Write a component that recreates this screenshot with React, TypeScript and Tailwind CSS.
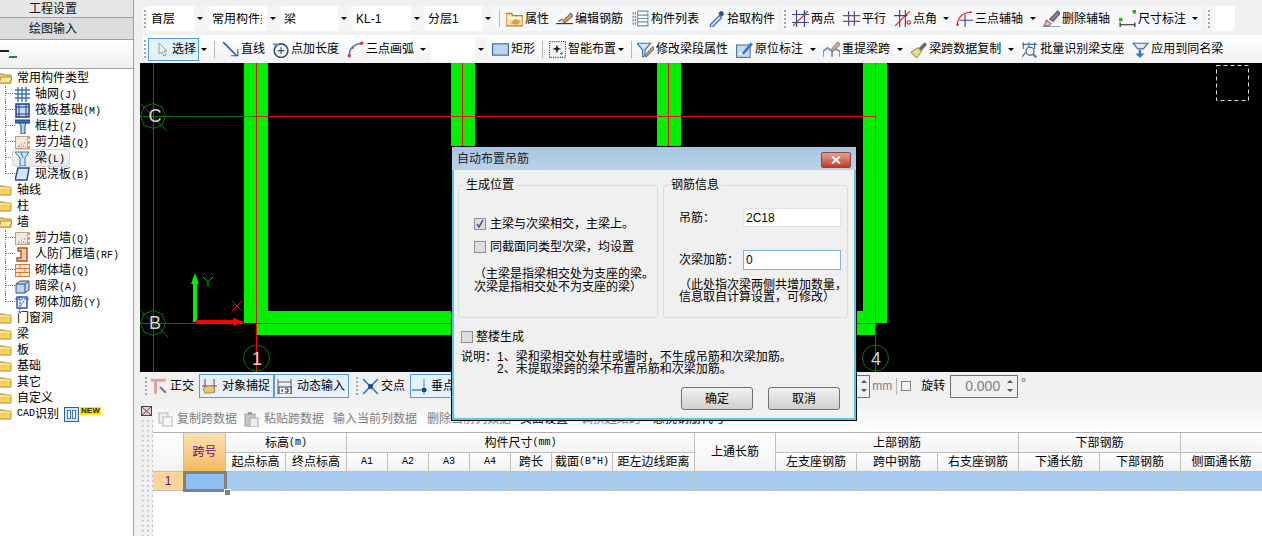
import type { ReactNode } from "react";

function Ico({ children, size = 15, className = "" }: { children: ReactNode; size?: number; className?: string }) {
  return (
    <svg width={size} height={size} viewBox="0 0 15 15" className={`shrink-0 ${className}`} fill="none">
      {children}
    </svg>
  );
}

const icons = {
  attr: (<><path d="M0 3h5l1 2h9v9H0z" fill="#f9dd9b" stroke="#bd7a35" /><path d="M2 6h11v2H2z" fill="#fff" /><path d="M4 12l4-4 5 2-3 3z" fill="#e0a040" /></>),
  edit: (<><path d="M0 12h15" stroke="#333" /><path d="M6 10l7-7 2 2-7 6z" fill="#e9a46a" stroke="#8a6d5a" /><path d="M2 10l4-2" stroke="#555" /></>),
  list: (<><path d="M1 2v11M3 2v11" stroke="#5b7fa8" strokeDasharray="2 1" /><path d="M5 1h9v13H5z" fill="#fff" stroke="#6d8fb8" /><path d="M5 4.5h9M5 7.5h9M5 10.5h9" stroke="#6d8fb8" /></>),
  pick: (<><path d="M2 13l8-8 2 2-8 8H2z" fill="#cfe2f7" stroke="#3c6fb3" /><path d="M9 3l3 3 2-2-1-3h-2z" fill="#1f4f94" /></>),
  two: (<><path d="M4 0v15M11 0v15M0 4h15M0 11h15" stroke="#3a3f8f" /><path d="M1 14L14 1" stroke="#c22" /><rect x="3" y="10" width="2" height="2" fill="#2b9b2b" /><rect x="10" y="3" width="2" height="2" fill="#2b9b2b" /></>),
  para: (<><path d="M5 1v13M10 1v13" stroke="#3a3f8f" /><path d="M0 5h15M0 10h15" stroke="#b4344e" /></>),
  angle: (<><path d="M5 0v15M10 0v15M0 5h12" stroke="#3a3f8f" /><path d="M1 14L14 1" stroke="#c22" /><circle cx="13" cy="11" r="1.5" stroke="#c22" /></>),
  arc: (<><path d="M1 14C1 7 6 2 13 2" stroke="#d22" /><circle cx="1.5" cy="13" r="1" fill="#d22" /><circle cx="13" cy="2" r="1" fill="#d22" /><path d="M8 4v11M3 9h12" stroke="#3a3f8f" /></>),
  del: (<><path d="M6 8l7-7 2 2-6 7z" fill="#8d7ab5" stroke="#555" /><path d="M3 9l4 3-2 2H1z" fill="#e8c8b0" stroke="#9a6a6a" /><path d="M0 15h15" stroke="#2a6ab5" /></>),
  dim: (<><rect x="0" y="7" width="3" height="3" fill="#2fa52f" /><rect x="12" y="0" width="3" height="3" fill="#2fa52f" /><path d="M1 11v4M14 11v4M1 13h13" stroke="#222" /></>),
  select: (<path d="M4 1v11l3-2 2 4 2-1-2-4h3z" fill="#eef3fa" stroke="#8aa0c0" />),
  line: (<><path d="M1 1l12 12" stroke="#2f5f9e" strokeWidth="1.5" /><path d="M8 13h6V7" stroke="#2f5f9e" /></>),
  ext: (<><circle cx="8" cy="8.5" r="6" stroke="#33507a" strokeWidth="1.4" /><path d="M8 5.5v6M5 8.5h6" stroke="#33507a" /><path d="M1 2h5v2H1z" fill="#5fa0dd" /></>),
  arc2: (<><path d="M2 13C2 7 6 3 13 2" stroke="#4a7fb5" strokeWidth="1.4" /><circle cx="2" cy="13" r="1.5" fill="#d33" /><circle cx="13" cy="2" r="1.5" fill="#d33" /><circle cx="5" cy="6" r="1" fill="#d33" /></>),
  rect: (<rect x="0.5" y="2.5" width="14" height="10" fill="#bcd3f3" stroke="#3b68ad" />),
  smart: (<><rect x="0.5" y="0.5" width="14" height="14" stroke="#444" strokeDasharray="1 1" /><path d="M7 3l1 3 3 1-3 1-1 3-1-3-3-1 3-1z" fill="#222" /><rect x="10" y="10" width="2" height="2" fill="#4a7fb5" /></>),
  modify: (<><path d="M0 2h12L7 8v5l-2 1V8z" fill="#cfe6f7" stroke="#2b74b8" /><path d="M7 13l7-8 1 2-7 7z" fill="#e9b08a" stroke="#8a6d5a" /></>),
  origin: (<><rect x="0.5" y="3.5" width="12" height="11" fill="#c5d8ee" stroke="#567ba8" /><path d="M5 11l8-10 2 2-8 9z" fill="#3a78c8" /><path d="M2 12l2-3 2 3z" fill="#fff" /></>),
  re: (<><path d="M0 14V9l4-3 4 3v5M8 14V9l3-2 4 2v5" stroke="#6d8fb8" strokeWidth="1.5" /><path d="M7 8l6-7 2 2-6 6z" fill="#e9b08a" stroke="#9a8a7a" /></>),
  copy: (<><path d="M7 7l6-6 2 2-5 6z" fill="#6a6a5a" /><path d="M1 10l6-4 3 3-4 6z" fill="#eadb9a" stroke="#a89a5a" /></>),
  batch: (<><path d="M1 3h13M2 1v6M7 1v6M12 1v6M1 14l3-4" stroke="#2f73b5" /><circle cx="8" cy="9" r="3.5" fill="#eef3fa" stroke="#555" /><path d="M10.5 11.5l3 3" stroke="#777" strokeWidth="2" /></>),
  apply: (<><path d="M1 2h13l-4 5H5z" fill="#dce9f7" stroke="#3b68ad" /><path d="M8 8v3h3l-4 4-4-4h3V8z" fill="#3b78c0" /></>),
  grid: (<path d="M0 3h15M0 7h15M0 11h15M3 0v15M7 0v15M11 0v15" stroke="#3f6fc0" strokeWidth="1.4" />),
  raft: (<><rect x="1" y="1" width="13" height="13" fill="#c9d7ef" stroke="#1f3f86" strokeWidth="1.5" /><path d="M1 4h13M1 11h13M4 1v13M11 1v13" stroke="#1f3f86" /></>),
  col: (<><path d="M0 1h15v3H0z" fill="#3f6fc0" stroke="#1f3f86" /><path d="M4 4h7l-1 3v8H6V7z" fill="#b6cdeb" stroke="#1f4f94" /></>),
  wall: (<><rect x="0.5" y="1.5" width="12" height="12" fill="#f0eae2" stroke="#caa27a" /><path d="M4 11h1M6 9h1M8 11h1M6 12h1M9 8h1M3 12h1M10 12h1" stroke="#777" /><path d="M14 1v3M14 6v3M14 11v3" stroke="#d87a2a" strokeWidth="1.5" /></>),
  beam: (<><path d="M0 1h14l-4 6v8H5V7z" fill="#cfe6f7" stroke="#2b74b8" /><path d="M6 1l2 6" stroke="#2b74b8" /></>),
  slab: (<path d="M3 1h11l-2 12H0z" fill="#d6e4f7" stroke="#1f4f9e" strokeWidth="1.5" />),
  door: (<path d="M3 1h9v13H2v-3h4V4H3z" fill="#f3c9a0" stroke="#a8521e" strokeWidth="1.4" />),
  brick: (<><rect x="0.5" y="1.5" width="14" height="12" fill="#fbe6d4" stroke="#d87a3a" /><path d="M0 5.5h15M0 9.5h15M5 1v4M10 5v4M5 9v5" stroke="#d87a3a" /></>),
  hid: (<><path d="M1 5l4-3h9v9l-4 3H1z" fill="#bcd3f3" stroke="#33507a" /><path d="M1 5h9v9M10 5l4-3" stroke="#33507a" /></>),
  mas: (<><rect x="2" y="2" width="10" height="11" fill="#eef3fa" stroke="#1f4fb0" strokeWidth="1.4" /><path d="M0 4h15M5 1v14M9 6l-4 5" stroke="#1f4fb0" strokeDasharray="2 1" /></>),
  ortho: (<><path d="M0 2h13M4 2v12" stroke="#dca0a0" strokeWidth="2.5" /><path d="M8 8l5 5" stroke="#6a7a9a" strokeWidth="2" /></>),
  snap: (<><path d="M3 0v14M12 0v14M0 7h15" stroke="#7a3a3a" /><path d="M1 10c3-4 8-4 11-2l1 4-4 2H3z" fill="#e8c878" stroke="#a88a3a" /></>),
  dyn: (<><path d="M1 0v15M1 3h13M14 0v15" stroke="#7a5a5a" /><rect x="2" y="8" width="12" height="7" fill="#fff" stroke="#333" /><path d="M5 10v3M8 10h3v3H8" stroke="#111" /></>),
  cross: (<><path d="M1 1l13 13M14 1L1 14" stroke="#3a80c8" strokeWidth="1.4" /><rect x="5.5" y="5.5" width="4" height="4" fill="#1f3f86" /></>),
  perp: (<><path d="M0 11h15" stroke="#3a80c8" strokeWidth="1.4" /><path d="M12 0v15" stroke="#3a80c8" /><rect x="10" y="9" width="4" height="4" fill="#1f3f86" /></>),
  copyDoc: (<><rect x="1" y="1" width="9" height="10" fill="#eee" stroke="#b8b8b8" /><rect x="5" y="5" width="9" height="9" fill="#f5f5f5" stroke="#b8b8b8" /></>),
  paste: (<><rect x="1" y="2" width="10" height="12" fill="#c8c8c8" stroke="#a0a0a0" /><rect x="4" y="0" width="4" height="3" fill="#999" /><rect x="6" y="6" width="8" height="9" fill="#eee" stroke="#aaa" /></>),
};

type IconName = keyof typeof icons;

function Arrow({ className = "" }: { className?: string }) {
  return <span className={`block w-0 h-0 shrink-0 border-x-[3px] border-x-transparent border-t-[3px] border-t-black ${className}`} />;
}

function Grip({ className = "" }: { className?: string }) {
  return (
    <span className={`flex flex-col gap-[2px] w-[3px] shrink-0 ${className}`}>
      <span className="h-[2px] w-[2px] bg-[#a8a8a8]" />
      <span className="h-[2px] w-[2px] bg-[#a8a8a8]" />
      <span className="h-[2px] w-[2px] bg-[#a8a8a8]" />
      <span className="h-[2px] w-[2px] bg-[#a8a8a8]" />
      <span className="h-[2px] w-[2px] bg-[#a8a8a8]" />
    </span>
  );
}

function Sep({ className = "" }: { className?: string }) {
  return <span className={`block w-px h-[17px] bg-[#b8b8b8] shrink-0 ${className}`} />;
}

function Tool({ icon, label, className = "" }: { icon: IconName; label: string; className?: string }) {
  return (
    <span className={`flex items-center gap-1 shrink-0 whitespace-nowrap ${className}`}>
      <Ico size={17} className="-mr-[2px]">{icons[icon]}</Ico>
      <span>{label}</span>
    </span>
  );
}

function Combo({ text, className = "" }: { text: string; className?: string }) {
  return (
    <span className={`flex items-center h-[25px] bg-white shrink-0 overflow-hidden ${className}`}>
      <span className="flex-1 ml-[3px] mr-[5px] overflow-hidden whitespace-nowrap">{text}</span>
      <span className="flex items-center justify-center w-[12px] h-full bg-[#f4f4f4]">
        <Arrow />
      </span>
    </span>
  );
}

function Folder({ open = false }: { open?: boolean }) {
  return (
    <svg width="13" height="12" viewBox="0 0 13 12" className="shrink-0 ml-[-1px]" fill="none">
      <path d="M0 2h5l1 1h6v8H0z" fill="#f5cf63" stroke="#b98a2a" />
      {open ? <path d="M2 5h11l-2 6H0z" fill="#fbe69a" stroke="#b98a2a" /> : <path d="M1 4h11" stroke="#fdeeb0" />}
    </svg>
  );
}

function TreeGroup({ label, open, children }: { label: ReactNode; open?: boolean; children?: ReactNode }) {
  return (
    <>
      <div className="flex items-center h-4 gap-[5px] whitespace-nowrap">
        <Folder open={open} />
        <span>{label}</span>
      </div>
      {children}
    </>
  );
}

function TreeItem({ icon, name, hot, last, selected }: { icon: IconName; name: string; hot: string; last?: boolean; selected?: boolean }) {
  return (
    <div className="flex items-center h-4 whitespace-nowrap">
      <span className={`block ml-[5px] w-[10px] h-4 shrink-0 ${last ? "" : "border-l border-dotted border-[#808080]"}`}>
        <span className={`block h-2 border-b border-dotted border-[#808080] ${last ? "border-l" : ""}`} />
      </span>
      <span className={`flex items-center h-4 gap-[5px] rounded-[3px] ${selected ? "-ml-[2px] pl-[2px] pr-[4px] bg-linear-to-b from-[#f8f8f8] to-[#e8e8e8] outline outline-[#d4d4d4]" : ""}`}>
        <Ico>{icons[icon]}</Ico>
        <span>
          {name}
          <span className="font-['Liberation_Mono',monospace] text-[10px]">({hot})</span>
        </span>
      </span>
    </div>
  );
}

function Check({ checked = false }: { checked?: boolean }) {
  return (
    <span className="flex items-center justify-center w-[12px] h-[12px] border border-[#8e8f8f] bg-[#dedede] shrink-0">
      {checked && (
        <svg width="10" height="10" viewBox="0 0 10 10" fill="none">
          <path d="M2 5l2 3 4-7" stroke="#4a5f97" strokeWidth="1.6" />
        </svg>
      )}
    </span>
  );
}

function Spinner() {
  return (
    <span className="flex flex-col items-center justify-center gap-[6px] w-[10px] h-full">
      <span className="block w-0 h-0 border-x-[3px] border-x-transparent border-b-[3px] border-b-[#555]" />
      <span className="block w-0 h-0 border-x-[3px] border-x-transparent border-t-[3px] border-t-[#555]" />
    </span>
  );
}

function DlgButton({ label }: { label: string }) {
  return (
    <span className="flex items-center justify-center w-[72px] h-[23px] rounded-[3px] border border-[#707070] bg-linear-to-b from-[#f2f2f2] to-[#cfcfcf]">
      {label}
    </span>
  );
}

function Th({ children, className = "" }: { children?: ReactNode; className?: string }) {
  return (
    <div className={`flex items-center justify-center whitespace-nowrap overflow-hidden border-r border-b border-[#c0c0c0] bg-linear-to-b from-white to-[#f2f2f2] ${className}`}>
      {children}
    </div>
  );
}

function Mono({ children }: { children: ReactNode }) {
  return <span className="font-['Liberation_Mono',monospace] text-[10px]">{children}</span>;
}

function Canvas() {
  const grid = "#007800";
  const red = "#ff0000";
  const beam = "#00ee00";
  return (
    <svg width="1122" height="309" viewBox="140 63 1122 309" className="block bg-black">
      <rect x="244" y="63" width="24" height="260" fill={beam} />
      <rect x="451" y="63" width="24" height="260" fill={beam} />
      <rect x="657" y="63" width="24" height="260" fill={beam} />
      <rect x="863" y="63" width="24" height="260" fill={beam} />
      <rect x="257" y="311" width="618" height="24" fill={beam} />
      <rect x="268" y="63" width="183" height="248" fill="#000" />
      <path d="M153.5 63v309M140 116.5h116M140 323.5h105" stroke={grid} />
      <path d="M256.5 63v309M462.5 63v260M668.5 63v260M875.5 63v309M256 116.5h620M257 323.5h618" stroke={red} />
      <polygon points="165.5,116 162,125 153,128.5 144,125 140.5,116 144,107 153,103.5 162,107" stroke={grid} fill="none" />
      <polygon points="165.5,323 162,332 153,335.5 144,332 140.5,323 144,314 153,310.5 162,314" stroke={grid} fill="none" />
      <circle cx="256.5" cy="358" r="13" stroke={grid} fill="none" />
      <circle cx="875.5" cy="358" r="13" stroke={grid} fill="none" />
      <path d="M141 104l26 27M141 311l27 26" stroke={grid} />
      <g fill="#d4d4d4" fontFamily="Liberation Sans, sans-serif" fontSize="18" textAnchor="middle">
        <text x="155" y="122">C</text>
        <text x="155" y="329">B</text>
        <text x="257" y="365">1</text>
        <text x="876" y="365">4</text>
      </g>
      <path d="M195 322v-38" stroke="#00ee00" strokeWidth="4" />
      <path d="M195 273l-4 11h8z" fill="#00ee00" />
      <path d="M203 277l5 5 5-5M208 282v5" stroke="#00c000" />
      <path d="M196 322h37" stroke="#ff0000" strokeWidth="4" />
      <path d="M245 322l-12-4v8z" fill="#ff0000" />
      <path d="M232 301l10 10M242 301l-10 10" stroke="#ff0000" />
      <rect x="1216.5" y="65.5" width="32" height="35" fill="none" stroke="#dddddd" strokeDasharray="4 3" />
    </svg>
  );
}

function Dialog() {
  return (
    <div className="absolute left-[451px] top-[146px] w-[406px] h-[275px] flex flex-col border border-black bg-[#f0f0f0] text-black">
      <div className="flex items-center justify-between h-[23px] shrink-0 pl-[5px] pr-[5px] bg-linear-to-b from-[#a6c6e2] to-[#bad3e9] text-[#222]">
        <span>自动布置吊筋</span>
        <span className="flex items-center justify-center w-[30px] h-[16px] mt-[2px] rounded-[2px] border border-[#8a4a40] bg-linear-to-b from-[#e4a090] to-[#bf3a2a]">
          <svg width="10" height="8" viewBox="0 0 10 8" fill="none">
            <path d="M1 0.5l8 7M9 0.5l-8 7" stroke="#fff" strokeWidth="2" />
          </svg>
        </span>
      </div>
      <div className="flex-1 flex flex-col border-x-2 border-b-2 border-[#5cc4e8] pl-[4px] pt-[8px]">
        <div className="flex gap-[5px]">
          <fieldset className="w-[200px] h-[140px] rounded-[3px] border border-[#d2dee6] pl-[15px]">
            <legend className="-ml-[10px] px-[2px] h-[14px] leading-[14px]">生成位置</legend>
            <div className="flex items-center gap-[4px] mt-[26px] h-[12px] whitespace-nowrap">
              <Check checked />
              <span>主梁与次梁相交，主梁上。</span>
            </div>
            <div className="flex items-center gap-[4px] mt-[11px] h-[12px] whitespace-nowrap">
              <Check />
              <span>同截面同类型次梁，均设置</span>
            </div>
            <p className="mt-[15px] leading-[13px] whitespace-nowrap">
              （主梁是指梁相交处为支座的梁。
              <br />
              次梁是指相交处不为支座的梁）
            </p>
          </fieldset>
          <fieldset className="w-[185px] h-[140px] rounded-[3px] border border-[#d2dee6] pl-[15px]">
            <legend className="-ml-[10px] px-[2px] h-[14px] leading-[14px]">钢筋信息</legend>
            <div className="flex items-center mt-[16px]">
              <span className="w-[64px]">吊筋：</span>
              <span className="flex items-center w-[98px] h-[19px] pl-[2px] bg-white border border-[#e2e3ea]">2C18</span>
            </div>
            <div className="flex items-center mt-[23px]">
              <span className="w-[64px] whitespace-nowrap">次梁加筋：</span>
              <span className="flex items-center w-[98px] h-[20px] pl-[2px] bg-white border border-[#7eb4ea]">0</span>
            </div>
            <p className="mt-[9px] leading-[12px] whitespace-nowrap">
              （此处指次梁两侧共增加数量，
              <br />
              信息取自计算设置，可修改）
            </p>
          </fieldset>
        </div>
        <div className="flex items-center gap-[3px] mt-[13px] ml-[3px] h-[12px]">
          <Check />
          <span>整楼生成</span>
        </div>
        <div className="mt-[8px] ml-[3px] leading-[12px] whitespace-nowrap">
          <p>说明：1、梁和梁相交处有柱或墙时，不生成吊筋和次梁加筋。</p>
          <p className="pl-[36px]">2、未提取梁跨的梁不布置吊筋和次梁加筋。</p>
        </div>
        <div className="flex justify-end gap-[15px] mt-[12px] pr-[14px]">
          <DlgButton label="确定" />
          <DlgButton label="取消" />
        </div>
      </div>
    </div>
  );
}

export default function App() {
  return (
    <div className="relative flex w-[1262px] h-[536px] overflow-hidden bg-[#f0f0f0] text-[12px] leading-none text-black font-['Liberation_Sans','Noto_Sans_CJK_SC',sans-serif]">
      {/* left panel */}
      <aside className="flex flex-col w-[134px] shrink-0 border-r border-[#a0a0a0]">
        <div className="flex items-center justify-center h-[18px] pr-[27px] border-b border-[#a0a0a0] bg-[#e6e6e6] text-[#111]">工程设置</div>
        <div className="flex items-center justify-center h-[22px] pr-[27px] border-b border-[#a0a0a0] bg-[#dcdcdc] text-[#111]">绘图输入</div>
        <div className="flex items-start h-[28px] pt-[10px] bg-linear-to-b from-white to-[#f0f0f0]">
          <span className="block w-[9px] h-[2px] bg-[#222]" />
          <span className="block w-[8px] h-[2px] mt-[6px] bg-[#1d7a7a]" />
        </div>
        <div className="flex-1 pt-[1px] bg-white border-t border-[#a0a0a0]">
          <TreeGroup label="常用构件类型" open>
            <TreeItem icon="grid" name="轴网" hot="J" />
            <TreeItem icon="raft" name="筏板基础" hot="M" />
            <TreeItem icon="col" name="框柱" hot="Z" />
            <TreeItem icon="wall" name="剪力墙" hot="Q" />
            <TreeItem icon="beam" name="梁" hot="L" selected />
            <TreeItem icon="slab" name="现浇板" hot="B" last />
          </TreeGroup>
          <TreeGroup label="轴线" />
          <TreeGroup label="柱" />
          <TreeGroup label="墙" open>
            <TreeItem icon="wall" name="剪力墙" hot="Q" />
            <TreeItem icon="door" name="人防门框墙" hot="RF" />
            <TreeItem icon="brick" name="砌体墙" hot="Q" />
            <TreeItem icon="hid" name="暗梁" hot="A" />
            <TreeItem icon="mas" name="砌体加筋" hot="Y" last />
          </TreeGroup>
          <TreeGroup label="门窗洞" />
          <TreeGroup label="梁" />
          <TreeGroup label="板" />
          <TreeGroup label="基础" />
          <TreeGroup label="其它" />
          <TreeGroup label="自定义" />
          <TreeGroup
            label={
              <span className="flex items-center">
                <Mono>CAD</Mono>识别
                <span className="flex gap-px ml-[5px] w-[15px] h-[15px] p-[2px] border border-[#2f5f9e] bg-[#d6e6f7]">
                  <span className="flex-1 border border-[#3b78c0] bg-white" />
                  <span className="flex-1 border border-[#3b78c0] bg-white" />
                </span>
                <span className="ml-px mb-[6px] px-px bg-[#ffe600] text-[8px] font-bold text-[#222]">NEW</span>
              </span>
            }
          />
        </div>
      </aside>

      <main className="flex flex-col flex-1 min-w-0 pl-[6px]">
        {/* toolbar row 1 */}
        <div className="flex h-[35px] pt-[6px] pb-[4px] pl-[3px]">
          <div className="flex items-center w-[636px] shrink-0 rounded-[3px] bg-[#f6f7f8]">
            <Grip className="ml-px" />
            <Combo text="首层" className="ml-px w-[58px]" />
            <Combo text="常用构件类型" className="ml-[3px] w-[70px]" />
            <Combo text="梁" className="ml-[2px] w-[69px]" />
            <Combo text="KL-1" className="ml-[3px] w-[70px]" />
            <Combo text="分层1" className="ml-[2px] w-[69px]" />
            <Sep className="ml-[5px]" />
            <Tool icon="attr" label="属性" className="ml-[6px]" />
            <Tool icon="edit" label="编辑钢筋" className="ml-[7px]" />
            <Tool icon="list" label="构件列表" className="ml-[9px]" />
            <Tool icon="pick" label="拾取构件" className="ml-[9px]" />
          </div>
          <div className="flex items-center w-[422px] ml-[2px] shrink-0 rounded-[3px] bg-[#f6f7f8]">
            <Grip className="ml-[3px]" />
            <Tool icon="two" label="两点" className="ml-[5px]" />
            <Tool icon="para" label="平行" className="ml-[8px]" />
            <Tool icon="angle" label="点角" className="ml-[8px]" />
            <Arrow className="ml-[6px]" />
            <Tool icon="arc" label="三点辅轴" className="ml-[7px]" />
            <Arrow className="ml-[7px]" />
            <Tool icon="del" label="删除辅轴" className="ml-[7px]" />
            <Tool icon="dim" label="尺寸标注" className="ml-[9px]" />
            <Arrow className="ml-[6px]" />
          </div>
          <div className="flex items-center w-[30px] ml-[2px] shrink-0 rounded-[3px] bg-[#f6f7f8]">
            <Grip className="ml-[3px]" />
            <span className="block ml-[4px] w-[20px] h-[25px] bg-white" />
          </div>
        </div>

        {/* toolbar row 2 */}
        <div className="flex items-center h-[28px] ml-[3px] bg-linear-to-b from-white to-[#f2f2f2]">
          <Grip className="ml-px" />
          <span className="flex items-center ml-px w-[51px] h-[23px] pl-[6px] gap-[2px] border border-[#4f9ce0] bg-[#e5f1fb] shrink-0">
            <Ico>{icons.select}</Ico>
            <span>选择</span>
          </span>
          <Arrow className="ml-[2px]" />
          <Sep className="ml-[7px]" />
          <Tool icon="line" label="直线" className="ml-[7px]" />
          <Tool icon="ext" label="点加长度" className="ml-[7px]" />
          <Tool icon="arc2" label="三点画弧" className="ml-[8px]" />
          <Arrow className="ml-[6px]" />
          <Combo text="" className="ml-[5px] w-[56px]" />
          <Tool icon="rect" label="矩形" className="ml-[5px]" />
          <Sep className="ml-[7px]" />
          <Tool icon="smart" label="智能布置" className="ml-[6px]" />
          <Arrow className="ml-[2px]" />
          <Sep className="ml-[7px]" />
          <Tool icon="modify" label="修改梁段属性" className="ml-[5px]" />
          <Tool icon="origin" label="原位标注" className="ml-[8px]" />
          <Arrow className="ml-[7px]" />
          <Tool icon="re" label="重提梁跨" className="ml-[7px]" />
          <Arrow className="ml-[7px]" />
          <Tool icon="copy" label="梁跨数据复制" className="ml-[7px]" />
          <Arrow className="ml-[7px]" />
          <Tool icon="batch" label="批量识别梁支座" className="ml-[7px]" />
          <Tool icon="apply" label="应用到同名梁" className="ml-[8px]" />
        </div>

        <Canvas />

        {/* snap toolbar */}
        <div className="flex items-center h-[34px] pb-[6px] pl-[5px]">
          <Grip />
          <Tool icon="ortho" label="正交" className="ml-[3px]" />
          <span className="flex items-center gap-[5px] w-[75px] h-[24px] ml-[5px] pl-[2px] border border-[#4f9ce0] bg-[#e5f1fb] shrink-0">
            <Ico>{icons.snap}</Ico>
            <span>对象捕捉</span>
          </span>
          <span className="flex items-center gap-[5px] w-[75px] h-[24px] pl-[2px] border border-[#4f9ce0] bg-[#e5f1fb] shrink-0">
            <Ico>{icons.dyn}</Ico>
            <span>动态输入</span>
          </span>
          <Grip className="ml-[7px]" />
          <Tool icon="cross" label="交点" className="ml-[3px]" />
          <span className="flex items-center gap-1 w-[74px] h-[24px] ml-[5px] pl-[1px] border border-[#4f9ce0] bg-[#e5f1fb] shrink-0">
            <Ico>{icons.perp}</Ico>
            <span>垂点</span>
          </span>
          <div className="flex items-center ml-auto mr-[236px]">
            <span className="flex justify-end w-[60px] h-[23px] border border-[#707070]">
              <Spinner />
            </span>
            <span className="ml-[2px] text-[#808080]">mm</span>
            <Sep className="ml-[4px]" />
            <span className="block ml-[4px] w-[10px] h-[10px] border border-[#808080]" />
            <span className="ml-[10px]">旋转</span>
            <span className="flex items-center justify-end w-[68px] h-[23px] ml-[5px] pr-[2px] border border-[#707070] text-[14px] text-[#808080]">
              <span className="mr-[5px]">0.000</span>
              <Spinner />
            </span>
            <span className="ml-[3px] mb-[6px] text-[#555]">°</span>
          </div>
        </div>

        {/* bottom grid */}
        <div className="flex flex-1 min-h-0">
          <div className="flex flex-col w-[13px] shrink-0">
            <svg width="11" height="10" viewBox="0 0 11 10" fill="none" className="ml-px shrink-0">
              <rect x="0.5" y="0.5" width="10" height="9" fill="#d8d8e8" stroke="#444" />
              <path d="M1 1l9 8M10 1L1 9" stroke="#b03030" />
            </svg>
            <div className="flex-1 mt-[2px] bg-[radial-gradient(circle,#c4c4c4_1px,transparent_1px)] bg-size-[5px_5px]" />
          </div>
          <div className="flex flex-col flex-1 min-w-0">
            <div className="flex items-center h-[26px] pl-[5px] whitespace-nowrap bg-linear-to-b from-[#f2f2f2] to-white text-[#808080]">
              <Ico>{icons.copyDoc}</Ico>
              <span className="ml-[4px]">复制跨数据</span>
              <span className="ml-[7px]"><Ico>{icons.paste}</Ico></span>
              <span className="ml-[5px]">粘贴跨数据</span>
              <span className="ml-[9px]">输入当前列数据</span>
              <span className="ml-[10px]">删除当前列数据</span>
              <span className="ml-[9px] text-black">页面设置</span>
              <span className="ml-[13px]">调换起始跨</span>
              <span className="ml-[12px] text-black">悬挑钢筋代号</span>
            </div>
            <div className="flex-1 bg-white">
              <div className="grid grid-cols-[31px_42px_60px_61px_41px_41px_41px_41px_41px_61px_82px_81px_81px_81px_81px_81px_81px_82px] grid-rows-[20px_19px_19px] border-t border-[#b0b0b0]">
                <Th className="row-span-2" />
                <div className="row-span-2 flex items-center justify-center border-r border-b border-[#c0c0c0] bg-linear-to-b from-[#fce3ae] to-[#f2bb5f] text-[#6c0a8c]">跨号</div>
                <Th className="col-span-2">标高<Mono>(m)</Mono></Th>
                <Th className="col-span-7">构件尺寸<Mono>(mm)</Mono></Th>
                <Th className="row-span-2">上通长筋</Th>
                <Th className="col-span-3">上部钢筋</Th>
                <Th className="col-span-2">下部钢筋</Th>
                <Th />
                <Th>起点标高</Th>
                <Th>终点标高</Th>
                <Th><Mono>A1</Mono></Th>
                <Th><Mono>A2</Mono></Th>
                <Th><Mono>A3</Mono></Th>
                <Th><Mono>A4</Mono></Th>
                <Th>跨长</Th>
                <Th>截面<Mono>(B*H)</Mono></Th>
                <Th>距左边线距离</Th>
                <Th>左支座钢筋</Th>
                <Th>跨中钢筋</Th>
                <Th>右支座钢筋</Th>
                <Th>下通长筋</Th>
                <Th>下部钢筋</Th>
                <Th>侧面通长筋</Th>

                <div className="flex items-center justify-center bg-[#fdd595] border-r border-b border-[#c0c0c0] text-[#6c0a8c]">1</div>
                <div className="relative border-[3px] border-[#808080] bg-[#8fc0f5] -m-px">
                  <span className="absolute right-[-6px] bottom-[-6px] w-[5px] h-[5px] bg-[#808080] outline outline-white" />
                </div>
                {Array.from({ length: 16 }).map((_, i) => (
                  <div key={i} className="bg-[#a6c9ee] border-r border-b border-[#bcc4cc]" />
                ))}
              </div>
            </div>
          </div>
        </div>
      </main>

      <Dialog />
    </div>
  );
}
